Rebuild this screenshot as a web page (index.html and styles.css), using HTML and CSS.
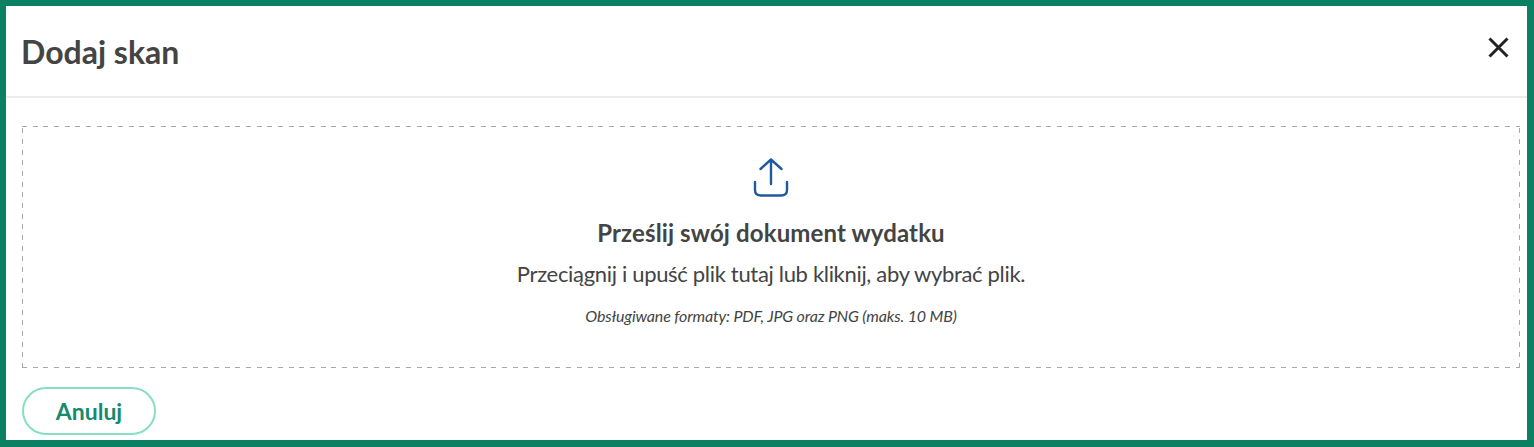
FILE: index.html
```html
<!DOCTYPE html>
<html lang="pl">
<head>
    <meta charset="UTF-8">
    <meta name="viewport" content="width=device-width, initial-scale=1.0">
    <title>Dodaj skan</title>
    <link rel="stylesheet" href="styles.css">
</head>
<body>

    <div class="modal">
        <div class="modal-header">
            <h2>Dodaj skan</h2>
            <button class="close-button" aria-label="Zamknij">
                <svg width="21" height="21" viewBox="0 0 21 21">
                    <path d="M1.5 1.5 L19.5 19.5 M19.5 1.5 L1.5 19.5" fill="none" stroke="#222" stroke-width="3"/>
                </svg>
            </button>
        </div>

        <div class="modal-body">
            <div class="dropzone">
                <svg class="upload-icon" width="36" height="39" viewBox="0 0 36 39">
                    <path d="M18 26 V2 M7.5 11 L18 1.5 L28.5 11" fill="none" stroke="#1f5a9e" stroke-width="2.4" stroke-linecap="round" stroke-linejoin="round"/>
                    <path d="M2 24 V32 Q2 37.5 8 37.5 H28 Q34 37.5 34 32 V24" fill="none" stroke="#1f5a9e" stroke-width="2.4" stroke-linecap="round"/>
                </svg>
                <div class="dropzone-title">Prześlij swój dokument wydatku</div>
                <div class="dropzone-text">Przeciągnij i upuść plik tutaj lub kliknij, aby wybrać plik.</div>
                <div class="dropzone-hint">Obsługiwane formaty: PDF, JPG oraz PNG (maks. 10 MB)</div>
            </div>
        </div>

        <div class="modal-footer">
            <button class="cancel-button">Anuluj</button>
        </div>
    </div>

</body>
</html>
```

FILE: styles.css
```css
html, body {
    height: 100%;
}

body {
    font-family: 'Lato', 'Open Sans', sans-serif;
    background-color: #fff;
    color: #444;
    margin: 0;
    overflow: hidden;
}

.modal {
    height: 100%;
    box-sizing: border-box;
    border-style: solid;
    border-color: #0b8063;
    border-width: 6px 7px 7px 6px;
    background-color: #fff;
}

.modal-header {
    display: flex;
    align-items: center;
    justify-content: space-between;
    height: 92px;
    box-sizing: border-box;
    padding: 0 18px 0 15px;
    border-bottom: 2px solid #ececec;
}

h2 {
    font-size: 32px;
    font-weight: 700;
    margin: 0;
}

.close-button {
    display: flex;
    padding: 0;
    margin-bottom: 7px;
    border: none;
    background: none;
    cursor: pointer;
}

.modal-body {
    padding: 28px 7px 0 16px;
}

.dropzone {
    height: 242px;
    box-sizing: border-box;
    padding-top: 32px;
    display: flex;
    flex-direction: column;
    align-items: center;
    background-image:
        repeating-linear-gradient(90deg, #a8a8a8 0 5px, transparent 5px 10.67px),
        repeating-linear-gradient(90deg, #a8a8a8 0 5px, transparent 5px 10.67px),
        repeating-linear-gradient(0deg, #a8a8a8 0 5px, transparent 5px 10.67px),
        repeating-linear-gradient(0deg, #a8a8a8 0 5px, transparent 5px 10.67px);
    background-size: 100% 1px, 100% 1px, 1px 100%, 1px 100%;
    background-position: 0 0, 0 100%, 0 0, 100% 0;
    background-repeat: no-repeat;
}

.upload-icon {
    margin-bottom: 21px;
}

.dropzone-title {
    font-size: 24px;
    font-weight: 700;
    letter-spacing: 0.12px;
    margin-bottom: 13px;
}

.dropzone-text {
    font-size: 22px;
    letter-spacing: -0.32px;
    margin-bottom: 19px;
}

.dropzone-hint {
    font-size: 16px;
    font-style: italic;
    letter-spacing: -0.14px;
}

.modal-footer {
    padding: 19px 16px 0;
}

.cancel-button {
    width: 134px;
    height: 48px;
    font-family: inherit;
    font-size: 23px;
    font-weight: 700;
    color: #17896c;
    background-color: #fff;
    border: 2px solid #86dec6;
    border-radius: 24px;
    cursor: pointer;
}
```
